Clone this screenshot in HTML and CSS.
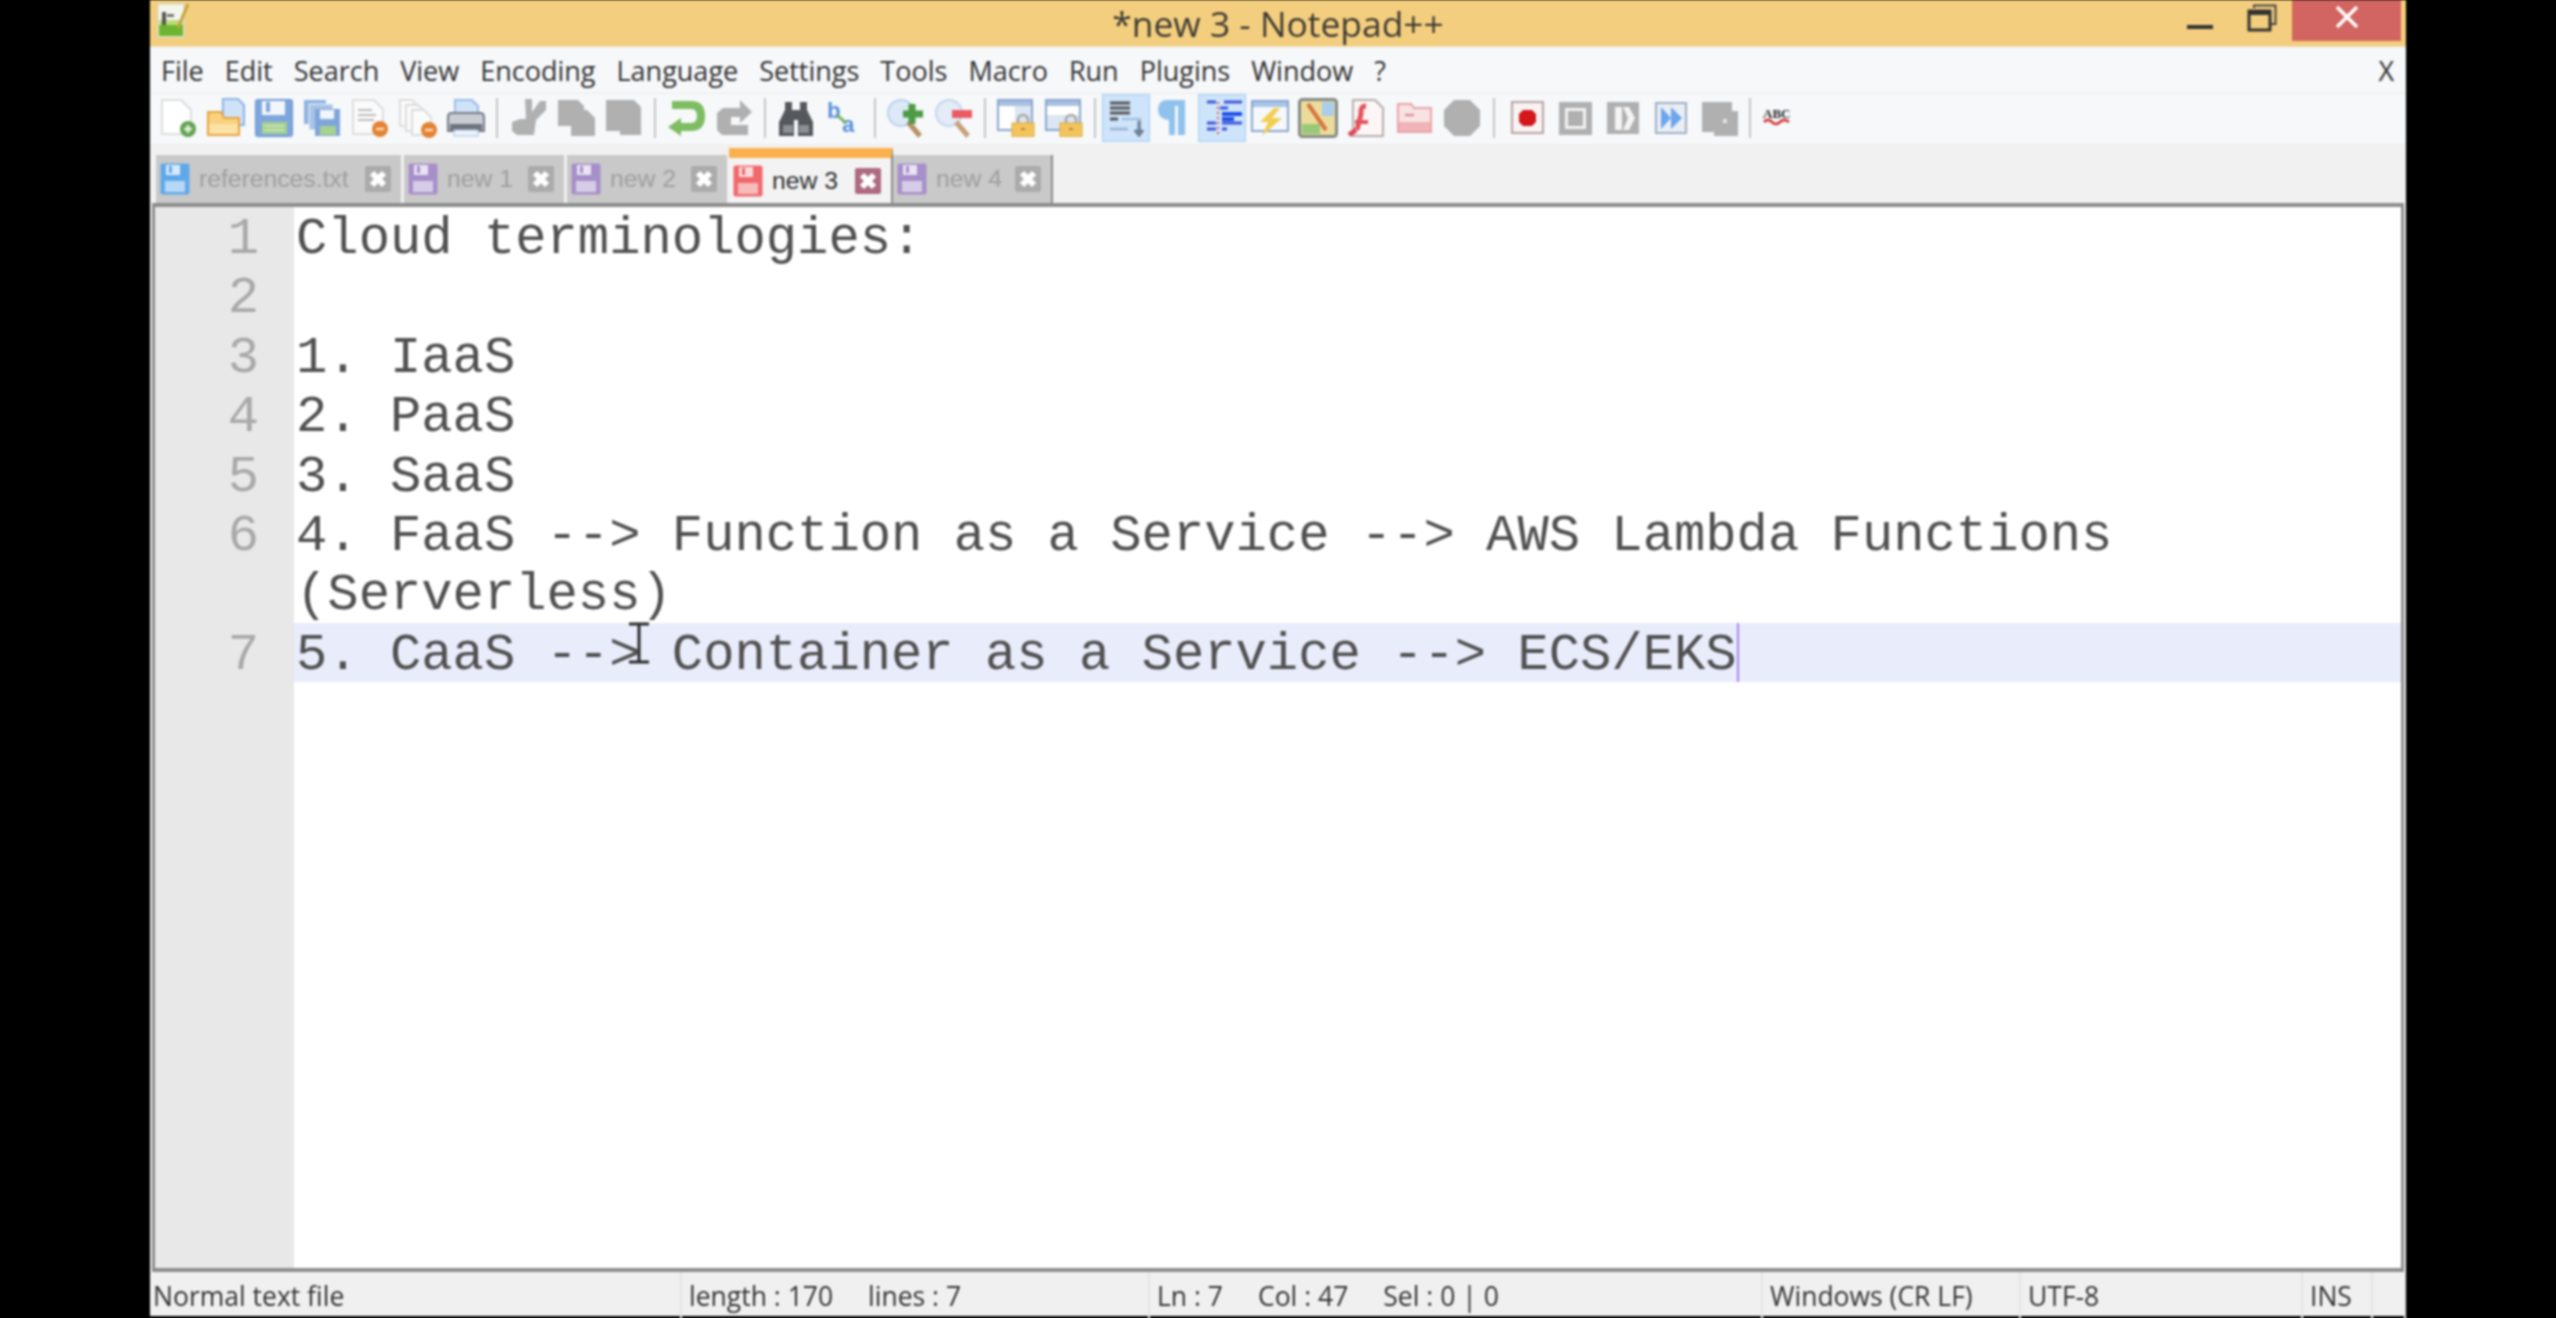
FILE: index.html
```html
<!DOCTYPE html>
<html>
<head>
  <title>*new 3 - Notepad++</title>
  <link rel="stylesheet" href="styles.css">
</head>
<body>
  <svg class="defs" width="0" height="0">
    <symbol id="disk" viewBox="0 0 30 32">
      <rect x="0.5" y="0.5" width="29" height="31" rx="2" fill="currentColor"/>
      <rect x="6" y="2" width="14" height="10" fill="#fff" opacity=".75"/>
      <rect x="9" y="3" width="3" height="7" fill="currentColor"/>
      <rect x="5" y="18" width="20" height="11" fill="#fff" opacity=".55"/>
    </symbol>
    <symbol id="tabx" viewBox="0 0 26 26">
      <rect width="26" height="26" rx="2" fill="currentColor"/>
      <path d="M7 7 19 19M19 7 7 19" stroke="#fff" stroke-width="6"/>
    </symbol>
    <symbol id="lock" viewBox="0 0 24 24">
      <path d="M7 11V7a5 5 0 0 1 10 0v4" fill="none" stroke="#a8a8a8" stroke-width="2.5"/>
      <rect x="1" y="10" width="22" height="14" fill="#f3c45c" stroke="#dca93f"/>
      <rect x="10" y="15" width="4" height="2" fill="#b98a2c"/>
    </symbol>
  </svg>

  <div class="window">
    <div class="titlebar">
      <div class="title-left">
        <svg class="app-icon" width="40" height="40" viewBox="0 0 40 40">
          <rect x="6" y="4" width="26" height="33" fill="#f4f6ee" stroke="#cfd5c4"/>
          <rect x="7" y="24" width="24" height="12" fill="#6db52e"/>
          <rect x="7" y="20" width="24" height="5" fill="#bcdc7a"/>
          <rect x="10" y="12" width="4" height="13" fill="#555"/>
          <rect x="15" y="14" width="7" height="3" fill="#777"/>
          <path d="M26 28 36 4" stroke="#c6a23c" stroke-width="3"/>
        </svg>
      </div>
      <div class="title-text">*new 3 - Notepad++</div>
      <div class="title-buttons">
        <div class="win-btn min-btn"><svg width="28" height="6" viewBox="0 0 28 6"><rect x="1" y="1" width="26" height="4" fill="#333"/></svg></div>
        <div class="win-btn restore-btn">
          <svg width="30" height="28" viewBox="0 0 30 28">
            <path d="M7 4V1.500H28.500V20H24" fill="none" stroke="#444" stroke-width="2"/>
            <rect x="2" y="7" width="21" height="19" fill="none" stroke="#333" stroke-width="3"/>
            <rect x="2" y="6" width="21" height="5" fill="#333"/>
          </svg>
        </div>
        <div class="close-btn"><svg width="24" height="22" viewBox="0 0 24 22"><path d="M2 1 22 21M22 1 2 21" stroke="#fff" stroke-width="3.500"/></svg></div>
      </div>
    </div>

    <div class="menubar">
      <span>File</span><span>Edit</span><span>Search</span><span>View</span><span>Encoding</span><span>Language</span><span>Settings</span><span>Tools</span><span>Macro</span><span>Run</span><span>Plugins</span><span>Window</span><span>?</span>
      <span class="menu-close">X</span>
    </div>

    <div class="toolbar">
      <!-- file -->
      <div class="tool"><svg width="40" height="40" viewBox="0 0 40 40"><path d="M4 2H23L33 12V36H4Z" fill="#fff" stroke="#ddd" stroke-width="2"/><circle cx="30" cy="31" r="8" fill="#62a352"/><path d="M30 27V35M26 31H34" stroke="#e6f3e0" stroke-width="2.500"/></svg></div>
      <div class="tool"><svg width="40" height="40" viewBox="0 0 40 40"><path d="M17 1H32L38 7V27H17Z" fill="#cfe2f8" stroke="#8db4e6" stroke-width="2"/><path d="M2 14H15L18 20H33V37H2Z" fill="#f9d27f" stroke="#e8a33f" stroke-width="2"/><rect x="3" y="26" width="29" height="10" fill="#fbe2a6"/></svg></div>
      <div class="tool"><svg width="40" height="40" viewBox="0 0 40 40"><rect x="1.500" y="1.500" width="37" height="37" rx="2" fill="#7fa6db" stroke="#6b94cf"/><rect x="8" y="3" width="23" height="14" fill="#f2f6fb"/><rect x="12" y="4" width="4" height="10" fill="#7fa6db"/><rect x="8" y="24" width="25" height="12" fill="#a6d18f"/><path d="M10 28H30M10 32H30" stroke="#cfe8c1" stroke-width="1.500"/></svg></div>
      <div class="tool"><svg width="40" height="40" viewBox="0 0 40 40"><rect x="2" y="2" width="22" height="24" fill="#8fb2e0"/><rect x="7" y="6" width="24" height="26" fill="#a6c3e8" stroke="#f4f7fb"/><rect x="13" y="11" width="25" height="27" fill="#7fa6db"/><rect x="18" y="12" width="14" height="9" fill="#f2f6fb"/><rect x="18" y="28" width="16" height="9" fill="#a6d18f"/></svg></div>
      <div class="tool"><svg width="40" height="40" viewBox="0 0 40 40"><path d="M3 2H24L33 11V36H3Z" fill="#fbfbfb" stroke="#ddd" stroke-width="2"/><path d="M8 12H22M8 17H26M8 22H24" stroke="#bbb" stroke-width="2"/><circle cx="30" cy="31" r="8" fill="#e38232"/><path d="M26 31H34" stroke="#fbdcb8" stroke-width="2.500"/></svg></div>
      <div class="tool"><svg width="40" height="40" viewBox="0 0 40 40"><path d="M2 2H14L20 8V28H2Z" fill="#fbfbfb" stroke="#ddd" stroke-width="2"/><path d="M8 7H20L26 13V33H8Z" fill="#fbfbfb" stroke="#ddd" stroke-width="2"/><path d="M14 12H26L33 19V37H14Z" fill="#fbfbfb" stroke="#ddd" stroke-width="2"/><circle cx="31" cy="32" r="8" fill="#e38232"/><path d="M27 32H35" stroke="#fbdcb8" stroke-width="2.500"/></svg></div>
      <div class="tool"><svg width="40" height="40" viewBox="0 0 40 40"><path d="M9 2H26L32 8V20H9Z" fill="#cfe2f8" stroke="#9bbde6" stroke-width="2"/><path d="M2 19Q2 15 6 15H34Q38 15 38 19V33H2Z" fill="#c9ccd2" stroke="#777d86" stroke-width="2"/><rect x="4" y="26" width="32" height="6" fill="#6e737b"/><rect x="8" y="32" width="24" height="6" fill="#eef3fa" stroke="#a9c4e8"/></svg></div>
      <div class="sep"></div>
      <!-- edit -->
      <div class="tool"><svg width="40" height="40" viewBox="0 0 40 40"><path d="M17 1H24V14L32 3H38V12L28 22 26 37H9L4 33V24L12 21H18Z" fill="#b0b0b0"/></svg></div>
      <div class="tool"><svg width="40" height="40" viewBox="0 0 40 40"><path d="M2 2H22L28 8V12H31L39 20V38H15V28H2Z" fill="#b0b0b0"/></svg></div>
      <div class="tool"><svg width="40" height="40" viewBox="0 0 40 40"><path d="M2 2H30L37 9V37H16V33H2Z" fill="#b0b0b0"/></svg></div>
      <div class="sep"></div>
      <!-- undo redo -->
      <div class="tool"><svg width="40" height="40" viewBox="0 0 40 40"><path d="M6 7H25Q35 7 35 18T25 29H15" fill="none" stroke="#7ebd62" stroke-width="8"/><path d="M2 29 15 20V38Z" fill="#7ebd62"/></svg></div>
      <div class="tool"><svg width="40" height="40" viewBox="0 0 40 40"><path d="M26 2 38 14 26 25V19H17V27H34V37H8L3 32V15L9 10H26Z" fill="#b0b0b0"/></svg></div>
      <div class="sep"></div>
      <!-- find -->
      <div class="tool"><svg width="40" height="40" viewBox="0 0 40 40"><path d="M9 4H16V12H24V4H31V12L37 24V38H22V22H18V38H3V24L9 12Z" fill="#55585d"/><rect x="7" y="27" width="10" height="8" fill="#8b9097"/><rect x="23" y="27" width="10" height="8" fill="#8b9097"/></svg></div>
      <div class="tool"><svg width="40" height="40" viewBox="0 0 40 40"><text x="3" y="20" class="glyph-b">b</text><text x="18" y="34" class="glyph-a">a</text><path d="M13 17 22 25" stroke="#6fb25a" stroke-width="3"/></svg></div>
      <div class="sep"></div>
      <!-- zoom -->
      <div class="tool"><svg width="40" height="40" viewBox="0 0 40 40"><circle cx="15" cy="15" r="13" fill="#dde9f7" stroke="#bcd3ee" stroke-width="2"/><path d="M22 24 34 38" stroke="#b89260" stroke-width="5"/><path d="M26 6V26M17 16H37" stroke="#4f9a45" stroke-width="7"/></svg></div>
      <div class="tool"><svg width="40" height="40" viewBox="0 0 40 40"><circle cx="15" cy="15" r="13" fill="#e3ecf7" stroke="#c6d6ec" stroke-width="2"/><path d="M22 24 34 38" stroke="#c8a078" stroke-width="5"/><path d="M18 16H38" stroke="#ec5a62" stroke-width="8"/></svg></div>
      <div class="sep"></div>
      <!-- sync scroll -->
      <div class="tool"><svg width="40" height="40" viewBox="0 0 40 40"><rect x="2" y="2" width="34" height="30" fill="#fff" stroke="#8aa6cf" stroke-width="2"/><rect x="3" y="3" width="32" height="5" fill="#a9c0e0"/><rect x="19" y="8" width="16" height="23" fill="#dbe6f3"/><use href="#lock" x="15" y="15" width="24" height="24"/></svg></div>
      <div class="tool"><svg width="40" height="40" viewBox="0 0 40 40"><rect x="2" y="2" width="34" height="30" fill="#fff" stroke="#8aa6cf" stroke-width="2"/><rect x="3" y="3" width="32" height="5" fill="#a9c0e0"/><rect x="3" y="17" width="32" height="14" fill="#dbe6f3"/><use href="#lock" x="15" y="15" width="24" height="24"/></svg></div>
      <div class="sep"></div>
      <!-- view -->
      <div class="tool tool-on"><svg width="40" height="40" viewBox="0 0 40 40"><path d="M4 5H24M4 10H24M4 15H24M4 21H12" stroke="#555" stroke-width="3"/><path d="M4 31H22" stroke="#9db8d8" stroke-width="3"/><path d="M16 21H34V33H28" fill="none" stroke="#9db8d8" stroke-width="2"/><path d="M33 23V35M29 32 33 37 37 32" fill="none" stroke="#6f7f92" stroke-width="3"/></svg></div>
      <div class="tool"><svg width="40" height="40" viewBox="0 0 40 40"><path d="M12 2H31V37H24V8H21V37H15V22Q4 21 4 12T12 2Z" fill="#8fc2ec"/></svg></div>
      <div class="tool tool-on"><svg width="40" height="40" viewBox="0 0 40 40"><path d="M5 4H14M22 4H40M18 10H26M5 25H14M20 25H40M5 31H14M20 31H25" stroke="#3d55d8" stroke-width="3"/><path d="M20 16H40M20 21H32" stroke="#1f4ee6" stroke-width="4"/><path d="M16 4V37" stroke="#e05a5a" stroke-width="2" stroke-dasharray="2 3"/></svg></div>
      <div class="tool"><svg width="40" height="40" viewBox="0 0 40 40"><rect x="2" y="3" width="36" height="30" fill="#f5f8fc" stroke="#8aa6cf" stroke-width="2"/><rect x="3" y="4" width="34" height="5" fill="#a9c6ea"/><path d="M24 10 10 24H18L12 38 32 20H22L30 10Z" fill="#f3cf4e"/></svg></div>
      <div class="tool"><svg width="40" height="40" viewBox="0 0 40 40"><rect x="1.500" y="1.500" width="37" height="37" rx="3" fill="#ecdc9b" stroke="#858a85" stroke-width="3"/><rect x="24" y="4" width="12" height="14" fill="#a9cdea"/><rect x="4" y="26" width="18" height="10" fill="#98c878"/><path d="M10 6 28 32" stroke="#d8733f" stroke-width="4"/></svg></div>
      <div class="tool"><svg width="40" height="40" viewBox="0 0 40 40"><path d="M7 2H29L37 10V38H7Z" fill="#fdf6f6" stroke="#b9adad" stroke-width="2"/><path d="M20 8Q14 8 15 16L11 32" fill="none" stroke="#e2545e" stroke-width="5"/><path d="M9 24H22" stroke="#e2545e" stroke-width="4"/><path d="M3 37 10 32" stroke="#d94a55" stroke-width="5"/></svg></div>
      <div class="tool"><svg width="40" height="40" viewBox="0 0 40 40"><path d="M4 6H17L20 10H37V34H4Z" fill="#f9e2e2" stroke="#e9a3a8" stroke-width="2"/><rect x="5" y="24" width="31" height="9" fill="#f0b4b8"/><rect x="11" y="16" width="9" height="2" fill="#d9888e"/></svg></div>
      <div class="tool"><svg width="40" height="40" viewBox="0 0 40 40"><path d="M12 2H28L38 12V28L28 38H12L2 28V12Z" fill="#b0b0b0"/></svg></div>
      <div class="sep sep-wide"></div>
      <!-- macro -->
      <div class="tool"><svg width="40" height="40" viewBox="0 0 40 40"><rect x="5" y="4" width="31" height="31" fill="#f7f3f3" stroke="#b9a3a3" stroke-width="2"/><path d="M16 12H25L29 16V24L25 28H16L12 24V16Z" fill="#d3171a"/></svg></div>
      <div class="tool"><svg width="40" height="40" viewBox="0 0 40 40"><rect x="4" y="4" width="33" height="33" fill="#b0b0b0"/><rect x="10" y="10" width="21" height="21" fill="#f2f2f2"/><rect x="13" y="13" width="15" height="15" fill="#b0b0b0"/></svg></div>
      <div class="tool"><svg width="40" height="40" viewBox="0 0 40 40"><rect x="4" y="4" width="32" height="32" fill="#b0b0b0"/><rect x="12" y="9" width="7" height="23" fill="#f4f4f4"/><path d="M20 9H26L32 20 26 32H20L25 20Z" fill="#f4f4f4"/></svg></div>
      <div class="tool"><svg width="40" height="40" viewBox="0 0 40 40"><rect x="5" y="5" width="30" height="30" fill="#eaeef4" stroke="#a0aec4" stroke-width="2"/><path d="M10 9 20 20 10 31ZM20 9 31 20 20 31Z" fill="#6da6ec"/></svg></div>
      <div class="tool"><svg width="40" height="40" viewBox="0 0 40 40"><path d="M3 4H33V13H39V38H15V34H3Z" fill="#b0b0b0"/><rect x="24" y="21" width="4" height="4" fill="#e6e6e6"/></svg></div>
      <div class="sep"></div>
      <div class="tool tool-left"><svg width="36" height="40" viewBox="0 0 36 40"><text x="0" y="20" class="glyph-abc">ABC</text><path d="M1 24Q5 20 9 24T17 24T26 24" fill="none" stroke="#d8322e" stroke-width="2.500"/></svg></div>
    </div>

    <div class="tabbar">
      <div class="tab tab-first">
        <svg class="tab-disk disk-blue"><use href="#disk"/></svg>
        <span class="tab-name">references.txt</span>
        <svg class="tab-close"><use href="#tabx"/></svg>
      </div>
      <div class="tab">
        <svg class="tab-disk disk-purple"><use href="#disk"/></svg>
        <span class="tab-name">new 1</span>
        <svg class="tab-close"><use href="#tabx"/></svg>
      </div>
      <div class="tab">
        <svg class="tab-disk disk-purple"><use href="#disk"/></svg>
        <span class="tab-name">new 2</span>
        <svg class="tab-close"><use href="#tabx"/></svg>
      </div>
      <div class="tab tab-active">
        <svg class="tab-disk disk-red"><use href="#disk"/></svg>
        <span class="tab-name">new 3</span>
        <svg class="tab-close"><use href="#tabx"/></svg>
      </div>
      <div class="tab tab-last">
        <svg class="tab-disk disk-purple"><use href="#disk"/></svg>
        <span class="tab-name">new 4</span>
        <svg class="tab-close"><use href="#tabx"/></svg>
      </div>
    </div>

    <div class="editor">
      <div class="line"><div class="num">1</div><div class="code">Cloud terminologies:</div></div>
      <div class="line"><div class="num">2</div><div class="code"> </div></div>
      <div class="line"><div class="num">3</div><div class="code">1. IaaS</div></div>
      <div class="line"><div class="num">4</div><div class="code">2. PaaS</div></div>
      <div class="line"><div class="num">5</div><div class="code">3. SaaS</div></div>
      <div class="line"><div class="num">6</div><div class="code">4. FaaS --&gt; Function as a Service --&gt; AWS Lambda Functions (Serverless)</div></div>
      <div class="line line-current"><div class="num">7</div><div class="code">5. CaaS --&gt; Container as a Service --&gt; ECS/EKS<span class="caret"></span><svg class="ibeam" width="24" height="42" viewBox="0 0 24 42"><path d="M2 2H22M12 2V40M2 40H22" fill="none" stroke="#2a2a2a" stroke-width="3"/></svg></div></div>
    </div>

    <div class="statusbar">
      <div class="st-cell">Normal text file</div>
      <div class="st-cell"><span class="st-item">length : 170</span><span>lines : 7</span></div>
      <div class="st-cell"><span class="st-item">Ln : 7</span><span class="st-item">Col : 47</span><span>Sel : 0 | 0</span></div>
      <div class="st-cell">Windows (CR LF)</div>
      <div class="st-cell">UTF-8</div>
      <div class="st-cell">INS</div>
      <div class="st-cell"></div>
    </div>
  </div>
</body>
</html>
```

FILE: styles.css
```css
html, body {
  margin: 0;
  height: 100%;
  background: #000;
  overflow: hidden;
}

.defs {
  position: absolute;
}

.window {
  margin-left: 150px;
  width: 2256px;
  height: 1316px;
  display: flex;
  flex-direction: column;
  background: #f1f1f1;
  font-family: "Open Sans", sans-serif;
  color: #333;
  filter: blur(0.9px);
}

/* title bar */
.titlebar {
  height: 47px;
  display: grid;
  grid-template-columns: 1fr auto 1fr;
  background: #f3ce7e;
  border-bottom: 1px solid #ead9b4;
  box-sizing: border-box;
}

.title-left {
  padding-left: 2px;
}

.app-icon {
  display: block;
}

.title-text {
  font-size: 35.4px;
  line-height: 46px;
  color: #3d3a33;
}

.title-buttons {
  display: flex;
  justify-content: flex-end;
  padding-right: 5px;
}

.win-btn {
  height: 41px;
  display: flex;
  justify-content: center;
  align-items: center;
}

.min-btn {
  width: 64px;
  padding-top: 12px;
  box-sizing: border-box;
}

.restore-btn {
  width: 60px;
  padding-bottom: 6px;
  box-sizing: border-box;
}

.close-btn {
  width: 109px;
  height: 41px;
  display: flex;
  justify-content: center;
  align-items: center;
  padding-bottom: 7px;
  box-sizing: border-box;
  background: #d26561;
}

/* menu */
.menubar {
  height: 45px;
  display: flex;
  align-items: center;
  gap: 21px;
  box-sizing: border-box;
  padding: 2px 12px 0 11px;
  background: #f6f8fa;
  font-size: 27px;
  color: #333;
}

.menu-close {
  margin-left: auto;
}

/* toolbar */
.toolbar {
  height: 53px;
  display: flex;
  align-items: center;
  padding: 0 0 3px 4px;
  background: #f6f8fa;
  border-top: 2px solid #f0f1f2;
  border-bottom: 1px solid #eeeeee;
  box-sizing: border-box;
}

.tool {
  width: 48px;
  height: 48px;
  flex: none;
  box-sizing: border-box;
  display: flex;
  justify-content: center;
  align-items: center;
}

.tool-left {
  justify-content: flex-start;
  padding-left: 6px;
}

.tool-on {
  background: #cde4fa;
  box-shadow: inset 0 0 0 1px #a9cff3;
}

.sep {
  width: 2px;
  height: 40px;
  flex: none;
  margin: 0 6px;
  background: #c4c4c4;
}

.sep-wide {
  margin: 0 8px 0 7px;
}

.glyph-b,
.glyph-a {
  font-family: "Liberation Sans", sans-serif;
  font-weight: bold;
  font-size: 22px;
  fill: #5c93e0;
}

.glyph-abc {
  font-family: "Liberation Serif", serif;
  font-weight: bold;
  font-size: 13px;
  fill: #333;
}

/* tabs */
.tabbar {
  height: 58px;
  display: flex;
  align-items: flex-end;
  gap: 3px;
  padding-left: 6px;
  background: #f1f1f1;
}

.tab {
  width: 160px;
  height: 48px;
  flex: none;
  box-sizing: border-box;
  display: flex;
  align-items: center;
  padding: 0 10px 0 4px;
  background: #c9c9c9;
  color: #ababab;
}

.tab-first {
  width: 245px;
}

.tab-active {
  width: 164px;
  height: 55px;
  background: #f3f3f3;
  border-top: 10px solid #fbb04d;
  color: #ad6a80;
  border-right: 2px solid #8a8a8a;
  margin-left: -1px;
  margin-right: -3px;
}

.tab-last {
  border-right: 2px solid #8a8a8a;
}

.tab-disk {
  width: 30px;
  height: 32px;
  flex: none;
}

.disk-blue {
  color: #5fa9ea;
}

.disk-purple {
  color: #a78fca;
}

.disk-red {
  color: #f0686c;
}

.tab-name {
  margin-left: 9px;
  font-family: "Liberation Sans", sans-serif;
  font-size: 24.7px;
  color: #a0a0a0;
}

.tab-active .tab-name {
  color: #2f2f2f;
}

.tab-close {
  width: 26px;
  height: 26px;
  flex: none;
  margin-left: auto;
}

/* editor */
.editor {
  flex: 1;
  min-height: 0;
  box-sizing: border-box;
  padding-top: 3px;
  background: linear-gradient(90deg, #e8e8e8 139px, #fff 139px);
  border: solid #8d8d8d;
  border-width: 4px 3px 4px 3px;
  margin: 0 2px;
  font-family: "Liberation Mono", monospace;
  font-size: 52.2px;
  line-height: 59.4px;
}

.line {
  display: flex;
}

.num {
  width: 139px;
  flex: none;
  box-sizing: border-box;
  padding-right: 35px;
  text-align: right;
  color: #a9a9a9;
}

.code {
  flex: 1;
  min-width: 0;
  padding-left: 2px;
  white-space: pre-wrap;
  color: #505050;
}

/* the band starts 3px above the text of its row */
.line-current {
  margin-top: -3px;
  line-height: 53.4px;
}

.line-current .num {
  padding-top: 6px;
}

.line-current .code {
  position: relative;
  padding-top: 6px;
  background: #e9ecfb;
}

.caret {
  position: absolute;
  top: 0;
  bottom: 0;
  width: 2px;
  background: #a884ee;
}

.ibeam {
  position: absolute;
  left: 333px;
  top: -1px;
}

/* status bar */
.statusbar {
  height: 44px;
  flex: none;
  display: grid;
  grid-template-columns: 532px 468px 613px 258px 282px 70px 33px;
  background: #f0f0f0;
  font-size: 26.5px;
  line-height: 48px;
  color: #333;
}

.st-cell {
  padding-left: 7px;
  border-right: 2px solid #e4e4e4;
  box-sizing: border-box;
  white-space: nowrap;
}

.st-cell:first-child {
  padding-left: 3px;
}

.st-item {
  margin-right: 35px;
}
```
